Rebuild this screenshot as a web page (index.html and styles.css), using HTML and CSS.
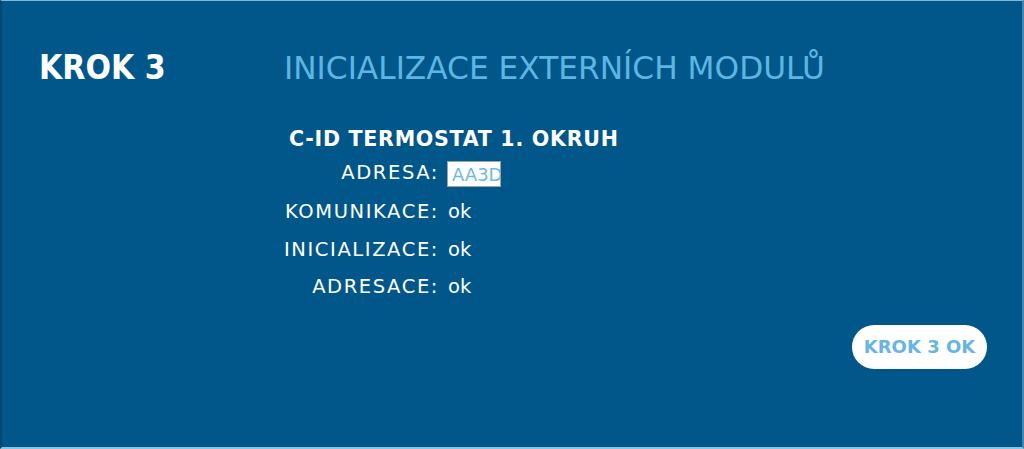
FILE: index.html
```html
<!DOCTYPE html>
<html lang="cs">
<head>
<meta charset="utf-8">
<title>Krok 3</title>
<link rel="stylesheet" href="styles.css">
</head>
<body>
<div class="screen">
  <header class="head">
    <h1 class="step">KROK 3</h1>
    <h2 class="title">INICIALIZACE EXTERNÍCH MODULŮ</h2>
  </header>
  <section class="module">
    <h3 class="module-name">C-ID TERMOSTAT 1. OKRUH</h3>
    <div class="rows">
      <div class="label">ADRESA:</div><div class="value"><input class="addr" type="text" value="AA3D"></div>
      <div class="label">KOMUNIKACE:</div><div class="value">ok</div>
      <div class="label">INICIALIZACE:</div><div class="value">ok</div>
      <div class="label">ADRESACE:</div><div class="value">ok</div>
    </div>
  </section>
  <div class="actions">
    <button class="ok-btn" type="button">KROK 3 OK</button>
  </div>
</div>
</body>
</html>
```

FILE: styles.css
```css
html, body {
  margin: 0;
  padding: 0;
}
body {
  background: #01578a;
  width: 1024px;
  height: 449px;
  overflow: hidden;
}
.screen {
  box-sizing: border-box;
  width: 1024px;
  height: 449px;
  background: #01578a;
  border-top: 1px solid #7fb9d9;
  border-right: 2px solid #3f86b3;
  border-bottom: 2px solid #8cc3e0;
  border-left: 2px solid #01466f;
  font-family: "DejaVu Sans", sans-serif;
  color: #ffffff;
}
.head {
  display: flex;
  align-items: baseline;
  padding: 47px 0 0 37px;
}
.step {
  margin: 0;
  width: 245px;
  font-family: "DejaVu Sans Condensed", "DejaVu Sans", sans-serif;
  font-size: 33.4px;
  font-weight: bold;
  line-height: 40px;
  color: #ffffff;
}
.title {
  margin: 0;
  font-size: 31.25px;
  font-weight: normal;
  line-height: 40px;
  color: #5cb6e3;
}
.module {
  padding: 39px 0 0 287px;
}
.module-name {
  margin: 0;
  font-size: 20.6px;
  font-weight: bold;
  letter-spacing: 0.7px;
  line-height: 24px;
}
.rows {
  display: grid;
  grid-template-columns: 155px auto;
  column-gap: 10px;
  row-gap: 13.3px;
  margin: 10px 0 0 -6px;
  font-size: 19.5px;
  line-height: 24px;
}
.label {
  text-align: right;
  letter-spacing: 1.6px;
  margin-right: -1px;
}
.value {
  display: flex;
  align-items: center;
}
.addr {
  box-sizing: border-box;
  width: 54px;
  height: 26px;
  margin: 0 0 0 -1px;
  padding: 0 0 0 4px;
  border: 1px solid #9aa4ab;
  background: #ffffff;
  color: #6fb9de;
  font-family: "DejaVu Sans", sans-serif;
  font-size: 18px;
  outline: none;
}
.actions {
  display: flex;
  justify-content: flex-end;
  padding: 26px 35px 0 0;
}
.ok-btn {
  width: 135px;
  height: 44px;
  border: none;
  border-radius: 22px;
  background: #ffffff;
  color: #6ab5de;
  font-family: "DejaVu Sans", sans-serif;
  font-weight: bold;
  font-size: 18px;
  padding: 0;
}
```
